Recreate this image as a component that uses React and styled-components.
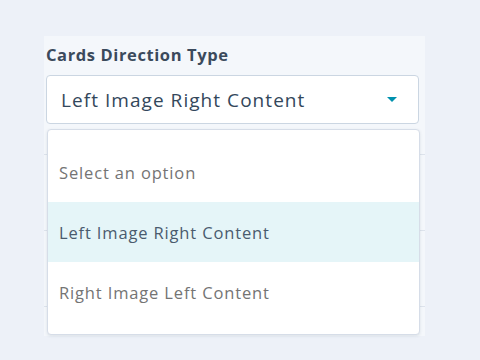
import React from 'react';
import styled, { createGlobalStyle } from 'styled-components';

const Global = createGlobalStyle`
  html, body {
    margin: 0;
    padding: 0;
    background: #edf1f8;
    font-family: 'Open Sans', 'Noto Sans', sans-serif;
  }
`;

const Page = styled.div`
  width: 480px;
  height: 360px;
  padding: 36px 0 0 44px;
  box-sizing: border-box;
  overflow: hidden;
`;

const Panel = styled.div`
  position: relative;
  width: 381px;
  height: 300px;
  background: #f4f7fb;
  padding: 7px 6px 0 2px;
  box-sizing: border-box;
`;

const Label = styled.div`
  font-size: 16.5px;
  font-weight: 700;
  letter-spacing: 0.6px;
  color: #3b4a5c;
  line-height: 24px;
  margin-bottom: 8px;
`;

const Select = styled.div`
  display: flex;
  align-items: center;
  justify-content: space-between;
  height: 49px;
  background: #fff;
  border: 1px solid #cbd6e2;
  border-radius: 4px;
  padding: 0 21px 0 14px;
  box-sizing: border-box;
  font-size: 19px;
  letter-spacing: 1.05px;
  color: #33475b;
`;

const Caret = styled.span`
  width: 0;
  height: 0;
  border-left: 5.5px solid transparent;
  border-right: 5.5px solid transparent;
  border-top: 5.5px solid #0091ae;
`;

const Behind = styled.div`
  display: flex;
  flex-direction: column;
  margin: 0 -6px 0 -2px;
`;

const Divider = styled.div`
  height: ${p => p.gap}px;
  border-bottom: 1px solid #dde3ec;
`;

const Menu = styled.ul`
  position: absolute;
  left: 3px;
  top: 93px;
  width: 373px;
  margin: 0;
  padding: 12px 0;
  list-style: none;
  background: #fff;
  border: 1px solid #d6dde8;
  border-radius: 4px;
  box-shadow: 0 1px 3px rgba(45, 62, 80, 0.12);
  box-sizing: border-box;
`;

const Option = styled.li`
  height: 60px;
  display: flex;
  align-items: center;
  padding: 0 11px;
  font-size: 16.5px;
  letter-spacing: 0.85px;
  color: ${p => (p.active ? '#4a5b6e' : '#747474')};
  background: ${p => (p.active ? '#e5f5f8' : '#fff')};
`;

const options = ['Select an option', 'Left Image Right Content', 'Right Image Left Content'];

export default function App() {
  return (
    <Page>
      <Global />
      <Panel>
        <Label>Cards Direction Type</Label>
        <Select>
          <span>Left Image Right Content</span>
          <Caret />
        </Select>
        <Behind>
          <Divider gap={30} />
          <Divider gap={75} />
          <Divider gap={75} />
        </Behind>
        <Menu>
          {options.map((o, i) => (
            <Option key={o} active={i === 1}>
              {o}
            </Option>
          ))}
        </Menu>
      </Panel>
    </Page>
  );
}
